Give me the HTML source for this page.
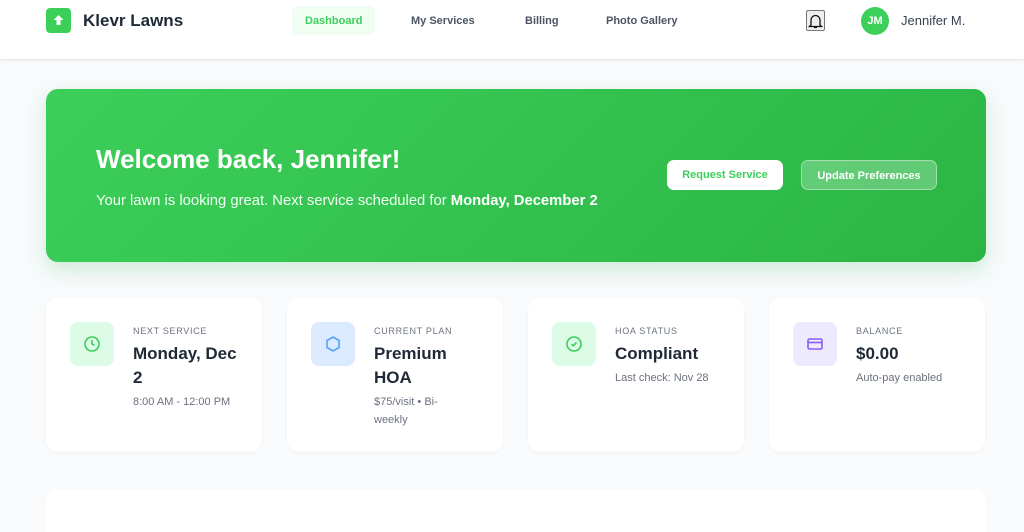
<!DOCTYPE html>
<html><head><meta charset="utf-8"><style>
*{box-sizing:border-box;margin:0;padding:0}
html,body{width:1024px;height:532px;overflow:hidden}
body{background:#f8fafc;font-family:"Liberation Sans",sans-serif;color:#1f2937;position:relative}
.nav{position:absolute;left:0;top:0;width:1024px;height:60px;background:#fff;border-bottom:1px solid #e5e7eb;box-shadow:0 1px 3px rgba(0,0,0,.05)}
.logo{position:absolute;left:46px;top:8px;width:25px;height:25px;border-radius:4px;background:#3ccf5a}
.brand{position:absolute;left:83px;top:11px;font-size:17px;font-weight:bold;color:#1f2937}
.nl{position:absolute;top:6px;height:29px;font-size:11px;font-weight:bold;color:#4b5563;padding:9px 13px 0;border-radius:6px}
.hero{position:absolute;left:46px;top:89px;width:940px;height:173px;border-radius:12px;background:linear-gradient(135deg,#3ccf5a,#2bb544);box-shadow:0 8px 20px rgba(40,180,70,.2)}
.hero h1{position:absolute;left:50px;top:55px;font-size:26px;color:#fff}
.hero p{position:absolute;left:50px;top:104px;font-size:14.8px;color:#f0fff3}
.b{position:absolute;top:71px;height:30px;line-height:30px;border-radius:7px;font-size:11px;font-weight:bold;text-align:center}
.card{position:absolute;top:298px;width:216px;height:154px;background:#fff;border-radius:12px;box-shadow:0 1px 3px rgba(0,0,0,.04)}
.ic{position:absolute;left:24px;top:24px;width:44px;height:44px;border-radius:8px;display:flex;align-items:center;justify-content:center}
.lb{position:absolute;left:87px;top:28px;font-size:9px;letter-spacing:.7px;color:#6b7280}
.v{position:absolute;left:87px;top:44px;width:106px;font-size:17px;font-weight:bold;line-height:24px;color:#1f2937}
.s{font-size:11px;font-weight:normal;color:#6b7280;line-height:18px;margin-top:3px}
</style></head><body>
<div class="nav">
<div class="logo"><svg width="25" height="25" viewBox="0 0 25 25"><path d="M12.5 7l-5 5h3v5h4v-5h3z" fill="#fff"/></svg></div>
<div class="brand">Klevr Lawns</div>
<div class="nl" style="left:292px;background:#f0fdf3;color:#3ccf5a">Dashboard</div>
<div class="nl" style="left:398px">My Services</div>
<div class="nl" style="left:512px">Billing</div>
<div class="nl" style="left:593px">Photo Gallery</div>
<div style="position:absolute;left:806px;top:10px;width:19px;height:21px;border:1px solid #777;background:#eee;border-radius:2px"><svg width="17" height="19" viewBox="0 0 17 19"><path d="M4 14V9a4.5 4.5 0 019 0v5l1.5 1.5h-12z M7 16.5h3" fill="none" stroke="#111" stroke-width="1.3"/></svg></div>
<div style="position:absolute;left:861px;top:7px;width:28px;height:28px;border-radius:50%;background:#3ccf5a;color:#fff;font-size:11px;font-weight:bold;text-align:center;line-height:28px">JM</div>
<div style="position:absolute;left:901px;top:13px;font-size:13px;color:#374151">Jennifer M.</div>
</div>
<div class="hero">
<h1>Welcome back, Jennifer!</h1>
<p>Your lawn is looking great. Next service scheduled for <b style="color:#fff">Monday, December 2</b></p>
<div class="b" style="left:621px;width:116px;background:#fff;color:#3ccf5a">Request Service</div>
<div class="b" style="left:755px;width:136px;background:rgba(255,255,255,.25);border:1px solid rgba(255,255,255,.4);color:#fff">Update Preferences</div>
</div>
<div class="card" style="left:46px"><div class="ic" style="background:#dcfce7"><svg width="18" height="18" viewBox="0 0 18 18"><circle cx="9" cy="9" r="7" fill="none" stroke="#3ccf5a" stroke-width="1.6"/><path d="M9 5v4l2.5 1.5" fill="none" stroke="#3ccf5a" stroke-width="1.6"/></svg></div><div class="lb">NEXT SERVICE</div><div class="v">Monday, Dec 2<div class="s">8:00 AM - 12:00 PM</div></div></div>
<div class="card" style="left:287px"><div class="ic" style="background:#dbeafe"><svg width="18" height="18" viewBox="0 0 18 18"><path d="M9 2l6 3.5v7L9 16l-6-3.5v-7z" fill="none" stroke="#4fa3f7" stroke-width="1.6"/></svg></div><div class="lb">CURRENT PLAN</div><div class="v">Premium HOA<div class="s" style="width:90px">$75/visit • Bi-weekly</div></div></div>
<div class="card" style="left:528px"><div class="ic" style="background:#dcfce7"><svg width="18" height="18" viewBox="0 0 18 18"><circle cx="9" cy="9" r="7" fill="none" stroke="#3ccf5a" stroke-width="1.6"/><path d="M6.5 9.2l1.7 1.6 3.3-3.3" fill="none" stroke="#3ccf5a" stroke-width="1.6"/></svg></div><div class="lb">HOA STATUS</div><div class="v">Compliant<div class="s">Last check: Nov 28</div></div></div>
<div class="card" style="left:769px"><div class="ic" style="background:#ede9fe"><svg width="18" height="18" viewBox="0 0 18 18"><rect x="2" y="4" width="14" height="10" rx="1.5" fill="none" stroke="#8b5cf6" stroke-width="1.6"/><path d="M2 7.5h14" stroke="#8b5cf6" stroke-width="1.6"/></svg></div><div class="lb">BALANCE</div><div class="v">$0.00<div class="s">Auto-pay enabled</div></div></div>
<div style="position:absolute;left:46px;top:489px;width:940px;height:43px;background:#fff;border-radius:12px 12px 0 0"></div>
</body></html>
